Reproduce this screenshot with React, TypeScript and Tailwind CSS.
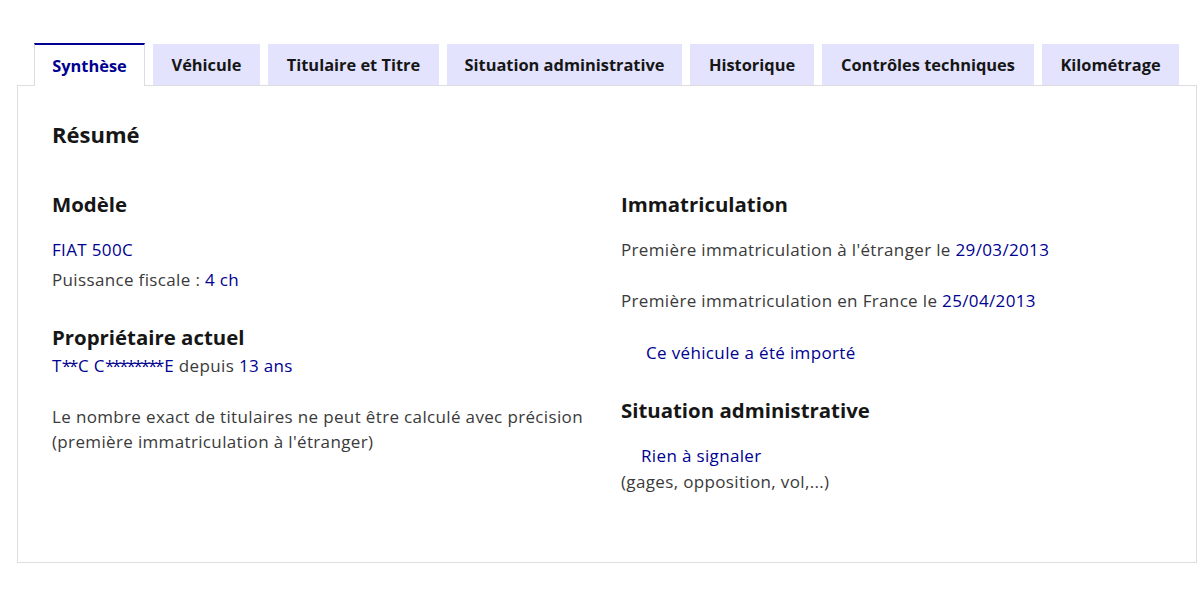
import React from "react";

const tabs: [string, string][] = [
  ["Synthèse", "w-[111px]"],
  ["Véhicule", "w-[107px]"],
  ["Titulaire et Titre", "w-[171px]"],
  ["Situation administrative", "w-[235px]"],
  ["Historique", "w-[124px]"],
  ["Contrôles techniques", "w-[212px]"],
  ["Kilométrage", "w-[137px]"],
];

const body = "text-[17px] tracking-[0.35px]";

export default function App() {
  return (
    <div
      className="w-[1200px] h-[595px] bg-white pt-[43px] text-[#3a3a3a]"
      style={{ fontFamily: '"Open Sans", "Noto Sans", sans-serif' }}
    >
      <div className="ml-[34px] flex items-end gap-[8px] h-[42px]">
        {tabs.map(([t, w], i) =>
          i === 0 ? (
            <div
              key={t}
              className={`${w} relative z-10 -mb-px h-[43px] pt-px flex items-center justify-center bg-white border-t-2 border-t-[#000091] border-x border-x-[#dddddd] text-[#000091] font-bold text-[16.4px]`}
            >
              {t}
            </div>
          ) : (
            <div
              key={t}
              className={`${w} h-[41px] pt-[2px] flex items-center justify-center bg-[#e3e3fd] text-[#161616] font-bold text-[16.4px]`}
            >
              {t}
            </div>
          )
        )}
      </div>
      <div className="ml-[17px] w-[1180px] h-[478px] border border-[#dddddd] pt-[34px] px-[34px]">
        <h2 className="text-[22px] leading-[28px] font-bold text-[#161616]">Résumé</h2>
        <div className="mt-[42px] grid grid-cols-[569px_1fr]">
          <div>
            <h3 className="text-[20.4px] leading-[28px] font-bold text-[#161616]">Modèle</h3>
            <p className={`mt-[20px] ${body} leading-[24px] text-[#000091]`}>FIAT 500C</p>
            <p className={`mt-[6px] ${body} leading-[24px]`}>
              Puissance fiscale : <span className="text-[#000091]">4 ch</span>
            </p>
            <h3 className="mt-[31px] text-[20.4px] leading-[28px] font-bold text-[#161616]">
              Propriétaire actuel
            </h3>
            <p className={`mt-[3px] ${body} leading-[24px]`}>
              <span className="text-[#000091]">
                T<span className="tracking-[-2.2px]">**</span>
                <span className="ml-[2px]">C C</span>
                <span className="tracking-[-2.2px]">********</span>
                <span className="ml-[2px]">E</span>
              </span>{" "}
              depuis <span className="text-[#000091]">13 ans</span>
            </p>
            <p className={`mt-[26px] ${body} leading-[25px]`}>
              Le nombre exact de titulaires ne peut être calculé avec précision
              <br />
              (première immatriculation à l'étranger)
            </p>
          </div>
          <div>
            <h3 className="text-[20.4px] leading-[28px] font-bold text-[#161616]">Immatriculation</h3>
            <p className={`mt-[20px] ${body} leading-[24px]`}>
              Première immatriculation à l'étranger le{" "}
              <span className="text-[#000091]">29/03/2013</span>
            </p>
            <p className={`mt-[27px] ${body} leading-[24px]`}>
              Première immatriculation en France le{" "}
              <span className="text-[#000091]">25/04/2013</span>
            </p>
            <p className={`mt-[28px] pl-[25px] ${body} leading-[24px] text-[#000091]`}>
              Ce véhicule a été importé
            </p>
            <h3 className="mt-[31px] text-[20.4px] leading-[28px] font-bold text-[#161616]">
              Situation administrative
            </h3>
            <p className={`mt-[20px] pl-[20px] ${body} leading-[24px] text-[#000091]`}>
              Rien à signaler
            </p>
            <p className={`mt-[2px] ${body} leading-[24px]`}>(gages, opposition, vol,...)</p>
          </div>
        </div>
      </div>
    </div>
  );
}
